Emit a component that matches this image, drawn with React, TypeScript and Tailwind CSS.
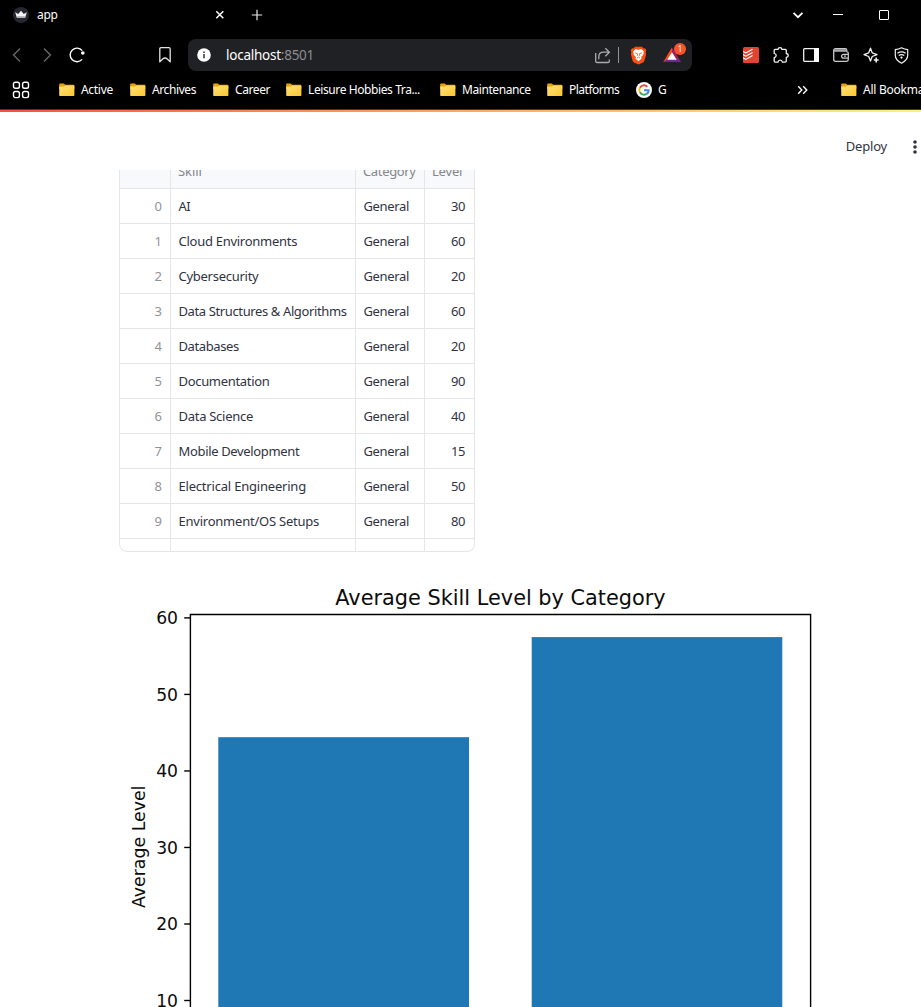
import React from "react";

const ui = "font-['Noto_Sans',sans-serif]";

const skills: [string, number, string][] = [
  ["AI", 30, "tracking-[-0.5px]"],
  ["Cloud Environments", 60, "tracking-[-0.27px]"],
  ["Cybersecurity", 20, "tracking-[-0.27px]"],
  ["Data Structures & Algorithms", 60, "tracking-[-0.38px]"],
  ["Databases", 20, "tracking-[-0.38px]"],
  ["Documentation", 90, "tracking-[-0.32px]"],
  ["Data Science", 40, "tracking-[-0.28px]"],
  ["Mobile Development", 15, "tracking-[-0.34px]"],
  ["Electrical Engineering", 50, "tracking-[-0.2px]"],
  ["Environment/OS Setups", 80, "tracking-[-0.23px]"],
];

const Folder = () => (
  <svg width="16" height="14" viewBox="0 0 16 14" className="shrink-0">
    <defs>
      <linearGradient id="fold" x1="0" y1="0" x2="1" y2="1">
        <stop offset="0" stopColor="#ffe27a" />
        <stop offset="1" stopColor="#fdc62f" />
      </linearGradient>
    </defs>
    <path d="M.2 1.2Q.2.5.9.5H4.8l1.4 1.3h8.4q.7 0 .7.7V6H.2z" fill="#e8a30c" />
    <path d="M.2 3.6h4.8l1.3-1h8.4q.7 0 .7.7v8.9q0 .7-.7.7H.9q-.7 0-.7-.7z" fill="url(#fold)" />
  </svg>
);

const Bookmark = ({ label, cls }: { label: string; cls: string }) => (
  <div className={`flex shrink-0 items-center gap-[6px] ${cls}`}>
    <Folder />
    <span className="whitespace-nowrap">{label}</span>
  </div>
);

const Cell = ({ children }: { children: React.ReactNode }) => (
  <div className="flex h-[30px] w-[30px] shrink-0 items-center justify-center">{children}</div>
);

const TabStrip = () => (
  <div className="flex h-[30px] items-center pl-[13px] text-[12px] text-white">
    <svg width="16" height="16" viewBox="0 0 16 16">
      <circle cx="8" cy="8" r="8" fill="#262730" />
      <path d="M2.2 5.2l3 1.8L8 3.7 10.8 7l3-1.8-1.6 5.6H3.8z" fill="#f4f4f6" />
      <path d="M4 9.3h8l-.4 1.5H4.4z" fill="#a9a9ae" />
    </svg>
    <span className="ml-[8px] w-[170px] tracking-[-0.3px]">app</span>
    <svg className="ml-[8px]" width="10" height="10" viewBox="0 0 10 10" stroke="#fff" strokeWidth="1.5">
      <path d="M1.3 1.3l7 7M8.3 1.3l-7 7" />
    </svg>
    <svg className="ml-[26px]" width="12" height="12" viewBox="0 0 12 12" stroke="#e8e8e8" strokeWidth="1.2">
      <path d="M.8 6h10.4M6 .8v10.4" />
    </svg>
    <div className="flex-1" />
    <svg width="12" height="10" viewBox="0 0 12 10" fill="none" stroke="#fff" strokeWidth="1.7">
      <path d="M1.5 2.8L6 7.2l4.5-4.4" />
    </svg>
    <svg className="ml-[29px]" width="10" height="10" viewBox="0 0 10 10" stroke="#fff">
      <path d="M0 4.5h10" />
    </svg>
    <svg className="mr-[32px] ml-[36px]" width="10" height="10" viewBox="0 0 10 10" fill="none" stroke="#fff">
      <rect x=".5" y=".5" width="9" height="9" rx=".4" />
    </svg>
  </div>
);

const AddressBar = () => (
  <div className="flex h-[32px] w-[504px] shrink-0 items-center rounded-[8px] bg-[#202124] pl-[9px]">
    <svg width="14" height="14" viewBox="0 0 14 14">
      <circle cx="7" cy="7" r="6.8" fill="#fff" />
      <path d="M7 6v4.2M7 3.4v1.5" stroke="#303135" strokeWidth="1.5" />
    </svg>
    <span className="ml-[15px] pt-[2px] text-[13.5px] leading-none tracking-[-0.25px] text-white">
      localhost<span className="text-[#8b8d91]">:8501</span>
    </span>
    <div className="flex-1" />
    <svg width="17" height="17" viewBox="0 0 17 17" fill="none" stroke="#a9abae" strokeWidth="1.3">
      <path d="M1.7 6v8.2q0 1.3 1.3 1.3h11q1.3 0 1.3-1.3V12.5" />
      <path d="M4.8 12.3V10Q4.8 5.2 9.6 5.2H15M11.3 1.2l4.1 4-4.1 4" />
    </svg>
    <div className="ml-[7px] h-[16px] w-px bg-[#929497]" />
    <svg className="ml-[11px]" width="17" height="19" viewBox="0 0 17 19">
      <path d="M5 .8h7l1.5 1.6 1.4-.2 1.4 2-.6 2 .5 1.7-1.8 6.8q-.4 1.2-1.4 1.9L8.5 18.6 4 16.6q-1-.7-1.4-1.9L.8 7.9l.5-1.7-.6-2 1.4-2 1.4.2z" fill="#fb4f14" />
      <path d="M5.5 3l3 .7 3-.7 2.3 2.6-.5 3.1-2.2 2.2.6 1.6-3.2 2.8-3.2-2.8.6-1.6-2.2-2.2-.5-3.1z" fill="#fff" />
      <path d="M4.9 7l2.4.5.4 1.6-.8.9M12.1 7l-2.4.5-.4 1.6.8.9M7 12l1.5-.8L10 12" fill="none" stroke="#fb5420" strokeWidth=".8" />
    </svg>
    <div className="relative mr-[4px] ml-[14px] h-[26px] w-[27px]">
      <svg width="27" height="26" viewBox="0 0 27 26">
        <path d="M11 5.2L2.3 20h3.6L11 11z" fill="#ff4724" />
        <path d="M11 5.2L20 20l-4.5-.8L11 11z" fill="#9e1f63" />
        <path d="M2.3 20h17.8l-3.6-3H6.8z" fill="#662d91" />
        <path d="M11 10.3L6.3 17.7h9.4z" fill="#fff" />
      </svg>
      <div className="absolute top-[1px] left-[13px] flex h-[12px] w-[12px] items-center justify-center rounded-[6px] bg-[#fb542b] text-[8px] leading-none text-white">1</div>
    </div>
  </div>
);

const Toolbar = () => (
  <div className="flex h-[50px] items-center pl-[2px]">
    <Cell>
      <svg width="10" height="16" viewBox="0 0 10 16" fill="none" stroke="#65676a" strokeWidth="1.4"><path d="M8 1.5L1.6 8 8 14.5" /></svg>
    </Cell>
    <Cell>
      <svg width="10" height="16" viewBox="0 0 10 16" fill="none" stroke="#65676a" strokeWidth="1.4"><path d="M2 1.5L8.4 8 2 14.5" /></svg>
    </Cell>
    <Cell>
      <svg width="16" height="16" viewBox="0 0 16 16" fill="none" stroke="#fff" strokeWidth="1.4">
        <path d="M13.1 12.4A6.8 6.8 0 1 1 13.2 3.6" />
        <circle cx="13.8" cy="6" r="1.8" fill="#fff" stroke="none" />
      </svg>
    </Cell>
    <div className="w-[58px]" />
    <Cell>
      <svg width="12" height="16" viewBox="0 0 12 16" fill="none" stroke="#e3e3e4" strokeWidth="1.3" strokeLinejoin="round">
        <path d="M.8 1.9Q.8.7 2 .7h8q1.2 0 1.2 1.2v13L8.3 12q-2.3-2-4.6 0L.8 14.9z" />
      </svg>
    </Cell>
    <div className="w-[8px]" />
    <AddressBar />
    <div className="w-[44px]" />
    <Cell>
      <svg width="16" height="16" viewBox="0 0 16 16">
        <rect width="16" height="16" rx="1.5" fill="#e44332" />
        <path d="M0 4.4l2.8 1.5 6.8-3.7M0 7.6l2.8 1.6 6.8-3.8M0 10.8l2.8 1.6 6.8-3.8" fill="none" stroke="#fff" strokeWidth="1.1" />
      </svg>
    </Cell>
    <Cell>
      <svg width="16" height="16" viewBox="0 0 16 16" fill="none" stroke="#f1f1f2" strokeWidth="1.3" strokeLinejoin="round">
        <path d="M1.2 3.5Q1.2 2.4 2.3 2.4H5Q5.2.7 7 .7T8.9 2.4h3.3q1.1 0 1.1 1.1v3q2 .2 2 1.9t-2 1.9v3.7q0 1.1-1.1 1.1H9.4Q9 13.1 7.2 13.1T5 15.1H2.3q-1.1 0-1.1-1.1v-3.4Q3.2 10.2 3.2 8.5T1.2 6.4z" />
      </svg>
    </Cell>
    <Cell>
      <svg width="16" height="14" viewBox="0 0 16 14">
        <rect x=".7" y=".7" width="14.6" height="12.6" rx=".8" fill="none" stroke="#f1f1f2" strokeWidth="1.3" />
        <path d="M11 0h4.2q.8 0 .8.8v12.4q0 .8-.8.8H11z" fill="#fff" />
      </svg>
    </Cell>
    <Cell>
      <svg width="16" height="14" viewBox="0 0 16 14" fill="none" stroke="#c9c9cb" strokeWidth="1.3">
        <path d="M.7 2.6Q.7.7 2.6.7h9.6q1.6 0 1.6 1.5v1.5q1.5.2 1.5 1.6v6.2q0 1.8-1.8 1.8H2.6q-1.9 0-1.9-1.8z" />
        <path d="M1 1.2h12.6v2.6H1z" fill="#aaaaac" stroke="none" />
        <path d="M15.2 6.3h-4.4Q8.6 6.3 8.6 8.2t2.2 1.9h4.4M11 8.2h2" />
      </svg>
    </Cell>
    <Cell>
      <svg width="17" height="17" viewBox="0 0 17 17" fill="none" stroke="#f1f1f2" strokeWidth="1.3" strokeLinejoin="round">
        <path d="M7.5 1.2L9.2 5.8 14 7.6 9.2 9.5 7.5 14 5.7 9.5 1 7.6l4.7-1.8z" />
        <path d="M13.2 10.6v4.8M10.8 13h4.8" strokeWidth="1.6" />
      </svg>
    </Cell>
    <Cell>
      <svg width="15" height="17" viewBox="0 0 15 17" fill="none" stroke="#f1f1f2" strokeWidth="1.2">
        <path d="M7.5.8Q10.5 2.4 13.7 2.7V8.3q0 4.8-6.2 7.9-6.2-3.1-6.2-7.9V2.7Q4.5 2.4 7.5.8z" strokeLinejoin="round" />
        <path d="M3.4 6.2q4.1-2.5 8.2 0M4.7 8.5q2.8-1.8 5.6 0" />
        <circle cx="7.5" cy="10.6" r="1.1" fill="#fff" stroke="none" />
      </svg>
    </Cell>
  </div>
);

const BookmarksBar = () => (
  <div className="flex h-[29px] items-start overflow-hidden pl-[12px] text-[12px] text-white">
    <div className="flex h-[20px] w-full shrink-0 items-center">
      <svg width="18" height="18" viewBox="0 0 18 18" fill="none" stroke="#fff" strokeWidth="1.4" className="shrink-0">
        <rect x="1.5" y="1.2" width="5.9" height="6.1" rx="1.8" />
        <rect x="10.6" y="1.2" width="5.9" height="6.1" rx="1.8" />
        <rect x="1.5" y="10.5" width="5.9" height="6.1" rx="1.8" />
        <rect x="10.6" y="10.5" width="5.9" height="6.1" rx="1.8" />
      </svg>
      <Bookmark label="Active" cls="ml-[29px] w-[71px] tracking-[-0.3px]" />
      <Bookmark label="Archives" cls="w-[83px] tracking-[-0.4px]" />
      <Bookmark label="Career" cls="w-[73px] tracking-[-0.4px]" />
      <Bookmark label="Leisure Hobbies Tra..." cls="w-[154px] tracking-[-0.4px]" />
      <Bookmark label="Maintenance" cls="w-[107px] tracking-[-0.42px]" />
      <Bookmark label="Platforms" cls="w-[89px] tracking-[-0.5px]" />
      <svg width="16" height="16" viewBox="0 0 16 16" className="shrink-0">
        <circle cx="8" cy="8" r="8" fill="#fff" />
        <g fill="none" strokeWidth="2">
          <path d="M3.9 5.7A4.7 4.7 0 0 1 11.3 4.7" stroke="#ea4335" />
          <path d="M3.9 5.7A4.7 4.7 0 0 0 3.9 10.3" stroke="#fbbc05" />
          <path d="M3.9 10.3A4.7 4.7 0 0 0 11 11.6" stroke="#34a853" />
          <path d="M11 11.6Q12.7 10.3 12.7 8.2H8" stroke="#4285f4" />
        </g>
      </svg>
      <span className="ml-[6px] w-[139px] shrink-0">G</span>
      <svg width="11" height="10" viewBox="0 0 11 10" fill="none" stroke="#fff" strokeWidth="1.4" className="shrink-0">
        <path d="M1.2 1.2L4.8 5 1.2 8.8M6.2 1.2L9.8 5 6.2 8.8" />
      </svg>
      <Bookmark label="All Bookmarks" cls="ml-[33px] tracking-[-0.25px]" />
    </div>
  </div>
);

const Row = ({ children, cls }: { children: React.ReactNode; cls: string }) => (
  <div className={`grid shrink-0 grid-cols-[51px_185px_69px_49px] border-b border-[#e6e6e9] [&>*]:flex [&>*]:items-center [&>*]:border-r [&>*]:border-[#e6e6e9] [&>*]:pt-[2px] [&>*:last-child]:border-r-0 [&>*]:whitespace-nowrap ${cls}`}>
    {children}
  </div>
);

const SkillTable = () => (
  <div className="ml-[119px] flex h-[382px] w-[356px] flex-col overflow-hidden rounded-b-[8px] border-x border-b border-[#e6e6e9] text-[13px] text-[#31333f]">
    <Row cls="-mt-[16px] h-[35px] bg-[#f8f9fb] text-[#84858d]">
      <div />
      <div className="pl-[7px] tracking-[-0.1px]">Skill</div>
      <div className="pl-[7px] tracking-[-0.35px]">Category</div>
      <div className="pl-[7px] tracking-[-0.2px]">Level</div>
    </Row>
    {skills.map(([name, level, cls], i) => (
      <Row key={name} cls="h-[35px]">
        <div className="justify-end pr-[8px] text-[#91929a]">{i}</div>
        <div className={`pl-[7.5px] ${cls}`}>{name}</div>
        <div className="pl-[7.5px] tracking-[-0.35px]">General</div>
        <div className="justify-end pr-[9px] tracking-[-0.4px]">{level}</div>
      </Row>
    ))}
    <Row cls="h-[13px] border-b-0">
      <div /><div /><div /><div />
    </Row>
  </div>
);

const ticks = [60, 50, 40, 30, 20, 10];

const Chart = () => (
  <svg className="block" width="921" height="455" viewBox="0 552 921 455" fontFamily="'DejaVu Sans', sans-serif" fill="#0c0c0c">
    <text x="335.3" y="604.6" fontSize="20.7" textLength="330.4" lengthAdjust="spacingAndGlyphs">Average Skill Level by Category</text>
    <text transform="translate(144.8 908) rotate(-90)" fontSize="17.3" textLength="122.4" lengthAdjust="spacingAndGlyphs">Average Level</text>
    {ticks.map((t, i) => (
      <g key={t}>
        <text x="178" y={624.4 + i * 76.5} fontSize="17.2" textAnchor="end">{t}</text>
        <path d={`M184.2 ${617.9 + i * 76.52}H190`} stroke="#000" strokeWidth="1.4" />
      </g>
    ))}
    <rect x="218.3" y="737.2" width="250.7" height="300" fill="#1f77b4" />
    <rect x="531.7" y="637.1" width="250.6" height="400" fill="#1f77b4" />
    <path d="M190.4 1020V614.5H810.6V1020" fill="none" stroke="#000" strokeWidth="1.4" />
  </svg>
);

export default function App() {
  return (
    <div className={`flex h-[1007px] w-[921px] flex-col overflow-hidden bg-white ${ui}`}>
      <div className="flex h-[110px] shrink-0 flex-col border-b border-[#3b3b3d] bg-black">
        <TabStrip />
        <Toolbar />
        <BookmarksBar />
      </div>
      <div className="h-[2px] shrink-0 bg-linear-to-r from-[#ff4b4b] to-[#fff37c]" />
      <div className="flex h-[58px] shrink-0 items-center justify-end pt-[11px] pr-[4px] text-[#31333f]">
        <span className="pt-px text-[13px] tracking-[-0.2px]">Deploy</span>
        <svg className="ml-[26px]" width="4" height="16" viewBox="0 0 4 16" fill="#31333f">
          <circle cx="2" cy="3" r="1.8" />
          <circle cx="2" cy="8" r="1.8" />
          <circle cx="2" cy="13" r="1.8" />
        </svg>
      </div>
      <SkillTable />
      <Chart />
    </div>
  );
}
